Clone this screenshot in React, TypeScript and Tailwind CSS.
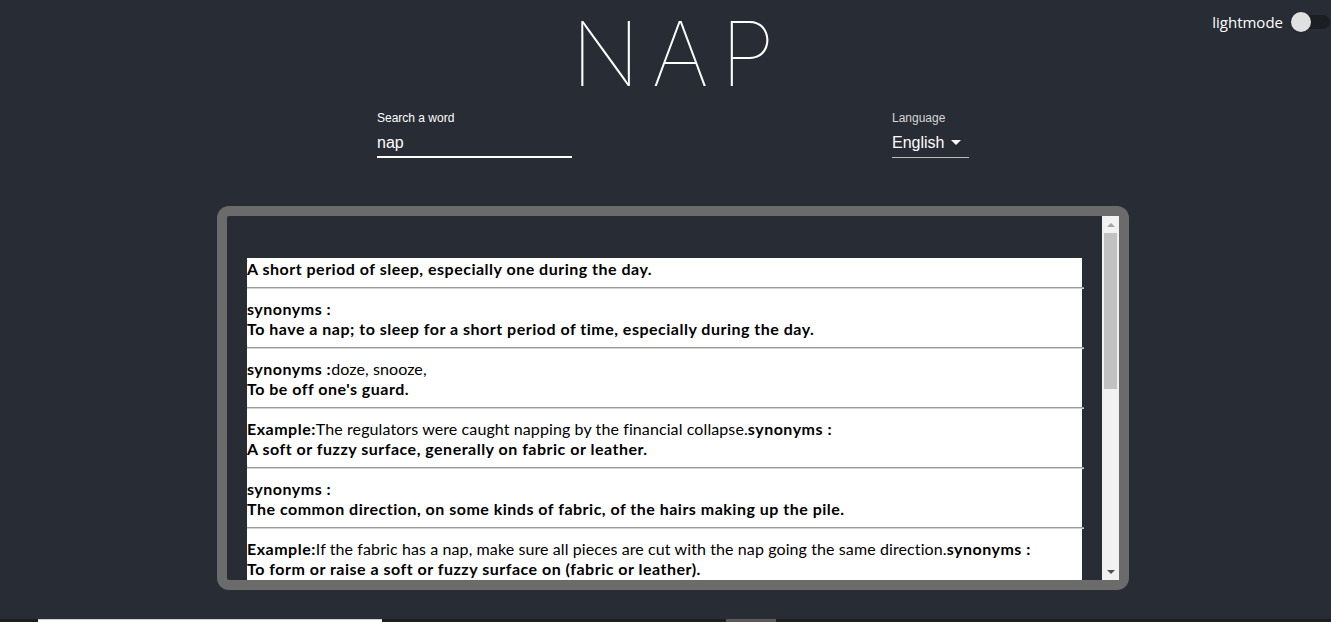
import { useState } from "react";

type Entry = { example?: string; synonyms?: string; definition: string; first?: boolean };

const entries: Entry[] = [
  { first: true, definition: "A short period of sleep, especially one during the day." },
  { synonyms: "", definition: "To have a nap; to sleep for a short period of time, especially during the day." },
  { synonyms: "doze, snooze,", definition: "To be off one's guard." },
  {
    example: "The regulators were caught napping by the financial collapse.",
    synonyms: "",
    definition: "A soft or fuzzy surface, generally on fabric or leather.",
  },
  { synonyms: "", definition: "The common direction, on some kinds of fabric, of the hairs making up the pile." },
  {
    example: "If the fabric has a nap, make sure all pieces are cut with the nap going the same direction.",
    synonyms: "",
    definition: "To form or raise a soft or fuzzy surface on (fabric or leather).",
  },
  { synonyms: "", definition: "Napoleon, a card game." },
  { synonyms: "", definition: "A bid to take all five tricks in the card game Napoleon." },
  { synonyms: "", definition: "To grab; to nab." },
];

function Row({ entry }: { entry: Entry }) {
  return (
    <div>
      <div className="leading-5">
        {!entry.first && (
          <div>
            {entry.example !== undefined && (
              <>
                <b className="tracking-[0.5px]">Example:</b>
                {entry.example}
              </>
            )}
            <b className="tracking-[0.5px]">synonyms :</b>
            {entry.synonyms}
          </div>
        )}
        <div className="font-bold tracking-[0.5px]">{entry.definition}</div>
      </div>
      <hr className="mt-2 mb-[10px] -mr-[2px] border-0 border-t border-b border-t-[#9a9a9a] border-b-[#d4d4d4]" />
    </div>
  );
}

// classic scrollbar look, the page is a still picture
function Scrollbar() {
  return (
    <div className="w-[17px] bg-[#f1f1f1] flex flex-col">
      <div className="h-[17px] flex items-center justify-center">
        <svg width="8" height="4" viewBox="0 0 8 4">
          <path d="M0 4h8L4 0z" fill="#a3a3a3" />
        </svg>
      </div>
      <div className="flex-1 px-[2px]">
        <div className="h-[156px] bg-[#c1c1c1]" />
      </div>
      <div className="h-[17px] flex items-center justify-center">
        <svg width="8" height="4" viewBox="0 0 8 4">
          <path d="M0 0h8L4 4z" fill="#505050" />
        </svg>
      </div>
    </div>
  );
}

export default function App() {
  const [light, setLight] = useState(false);

  return (
    <div className="relative min-h-[622px] bg-[#282c34] flex flex-col">
      <div className="absolute top-[11px] right-[1px] flex items-center gap-[9px] font-['Open_Sans',sans-serif] text-[15px] text-white">
        <span>lightmode</span>
        <button
          onClick={() => setLight(!light)}
          className="relative w-[38px] h-[14px] rounded-full bg-[#1b1e23]"
        >
          <span className="absolute -left-px top-1/2 -translate-y-1/2 w-5 h-5 rounded-full bg-[#e0e0e0] shadow" />
        </button>
      </div>

      <div className="flex-1 pl-[15px] flex flex-col items-center">
        <h1 className="mt-[9px] pl-[12px] font-['Inter',sans-serif] font-thin text-[89px] tracking-[12px] leading-none text-white">
          NAP
        </h1>

        <div className="mt-[13px] w-[592px] flex justify-between font-['Liberation_Sans',Arial,sans-serif]">
          <div className="w-[195px]">
            <div className="text-[12px] leading-[14px] text-white">Search a word</div>
            <div className="mt-[6px] border-b-2 border-white">
              <input
                defaultValue="nap"
                className="w-full bg-transparent text-white text-[16px] leading-[23px] pb-[2px] outline-none"
              />
            </div>
          </div>
          <div className="w-[77px]">
            <div className="text-[12px] leading-[14px] text-[#d6d6d6]">Language</div>
            <div className="mt-[6px] pb-[3px] border-b border-[#bdbdbd] flex items-center gap-[7px] text-white text-[16px] leading-[23px]">
              <span>English</span>
              <svg width="10" height="5" viewBox="0 0 10 5">
                <path d="M0 0h10L5 5z" fill="#fff" />
              </svg>
            </div>
          </div>
        </div>

        <div className="mt-[48px] w-[912px] h-[384px] border-[10px] border-[#6b6b6b] rounded-[12px] flex">
          <div className="flex-1 overflow-hidden pt-[42px] px-5">
            <div className="bg-white pt-px font-['Lato',sans-serif] text-[16px] tracking-[0.1px] text-black">
              {entries.map((e, i) => (
                <Row key={i} entry={e} />
              ))}
            </div>
          </div>
          <Scrollbar />
        </div>
      </div>

      <div className="h-[3px] bg-[#1e1e1c] flex">
        <div className="ml-[38px] w-[344px] bg-white border-t border-[#cfcfcf]" />
        <div className="ml-[344px] w-[50px] bg-[#5b5a55]" />
      </div>
    </div>
  );
}
